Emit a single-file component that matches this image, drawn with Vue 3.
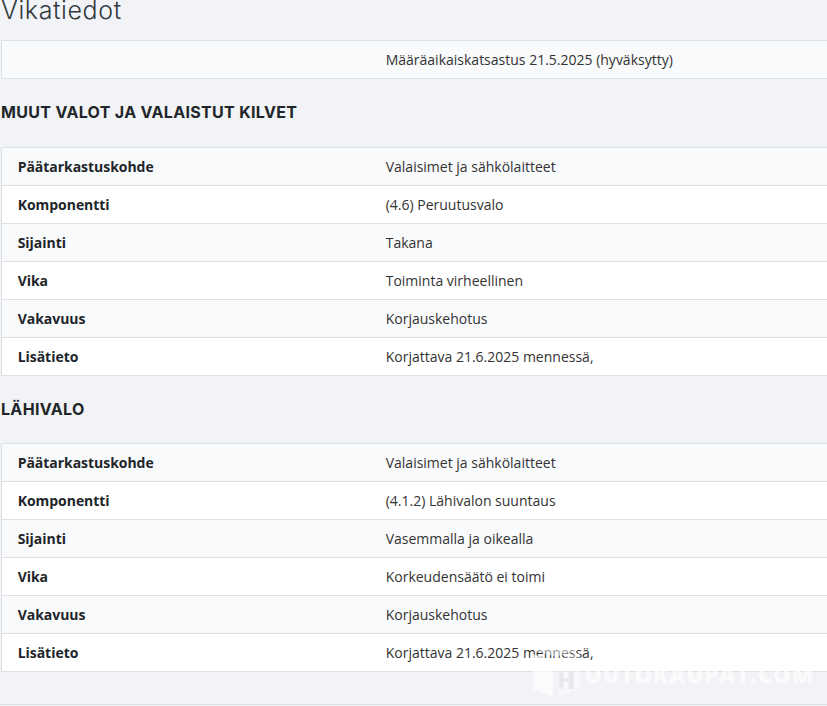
<script setup>
const sections = [
  {
    title: 'MUUT VALOT JA VALAISTUT KILVET',
    rows: [
      ['Päätarkastuskohde', 'Valaisimet ja sähkölaitteet'],
      ['Komponentti', '(4.6) Peruutusvalo'],
      ['Sijainti', 'Takana'],
      ['Vika', 'Toiminta virheellinen'],
      ['Vakavuus', 'Korjauskehotus'],
      ['Lisätieto', 'Korjattava 21.6.2025 mennessä,'],
    ],
  },
  {
    title: 'LÄHIVALO',
    rows: [
      ['Päätarkastuskohde', 'Valaisimet ja sähkölaitteet'],
      ['Komponentti', '(4.1.2) Lähivalon suuntaus'],
      ['Sijainti', 'Vasemmalla ja oikealla'],
      ['Vika', 'Korkeudensäätö ei toimi'],
      ['Vakavuus', 'Korjauskehotus'],
      ['Lisätieto', 'Korjattava 21.6.2025 mennessä,'],
    ],
  },
]
</script>

<template>
  <div class="page">
    <h2 class="title">Vikatiedot</h2>
    <div class="table">
      <div class="row">
        <div class="key"></div>
        <div class="val">Määräaikaiskatsastus 21.5.2025 (hyväksytty)</div>
      </div>
    </div>
    <template v-for="s in sections" :key="s.title">
      <h3 class="heading">{{ s.title }}</h3>
      <div class="table">
        <div v-for="r in s.rows" :key="r[0]" class="row">
          <div class="key">{{ r[0] }}</div>
          <div class="val">{{ r[1] }}</div>
        </div>
      </div>
    </template>
    <div class="rule"></div>
    <div class="mark">
      <svg class="cube" width="48" height="52" viewBox="0 0 48 52">
        <path d="M0 9 20 16V52L0 44z" fill="#fff" />
        <path d="M25 15 47 7V44L25 52z" fill="#fff" opacity=".55" />
        <path d="M3 6 24 0l21 5-21 7z" fill="#fff" opacity=".7" />
      </svg>
      <span class="cube-letter">H</span>
      <span class="mark-text">UUTOKAUPAT.COM</span>
    </div>
  </div>
</template>

<style>
html, body {
  margin: 0;
  background: #f2f3f7;
  overflow: hidden;
}
</style>

<style scoped>
.page {
  position: relative;
  width: 827px;
  height: 706px;
  overflow: hidden;
  padding-left: 1px;
  box-sizing: border-box;
  background: #f2f3f7;
  color: #212529;
  font-family: "Open Sans", "Liberation Sans", sans-serif;
  font-size: 14px;
}
.title {
  margin: 0 0 20px;
  height: 20px;
  line-height: 20px;
  font-family: Inter, "Liberation Sans", sans-serif;
  font-size: 25px;
  font-weight: 300;
  letter-spacing: 0.6px;
  color: #343a40;
}
.heading {
  margin: 0;
  height: 67.6px;
  line-height: 66px;
  font-family: Inter, "Liberation Sans", sans-serif;
  font-size: 16px;
  font-weight: 700;
  letter-spacing: 0.32px;
  color: #212529;
}
.table {
  width: 900px;
  border: 1px solid #dee2e6;
  border-bottom: 0;
  box-sizing: border-box;
}
.row {
  display: flex;
  height: 38px;
  box-sizing: border-box;
  border-bottom: 1px solid #dee2e6;
  align-items: center;
  background: #fff;
}
.row:nth-child(odd) {
  background: #f9fafc;
}
.key {
  width: 368px;
  flex: none;
  padding-left: 15.7px;
  box-sizing: border-box;
  font-weight: 700;
  letter-spacing: -0.04px;
}
.val {
  padding-left: 15.7px;
  color: #333;
}
.rule {
  margin-top: 32px;
  margin-left: -1px;
  height: 1px;
  background: #dee2e6;
}
.mark {
  position: absolute;
  left: 533px;
  top: 645px;
  width: 290px;
  height: 52px;
  display: flex;
  align-items: flex-end;
  color: #fff;
  opacity: 0.7;
  filter: blur(0.5px);
  font-family: "Open Sans", sans-serif;
  font-weight: 800;
  white-space: nowrap;
}
.cube {
  flex: none;
}
.cube-letter {
  position: absolute;
  left: 24px;
  top: 20px;
  line-height: 30px;
  font-size: 24px;
  color: #e4e6ec;
}
.mark-text {
  margin-left: 4px;
  padding-bottom: 8px;
  line-height: 30px;
  font-size: 22px;
  letter-spacing: 1.1px;
}
</style>
